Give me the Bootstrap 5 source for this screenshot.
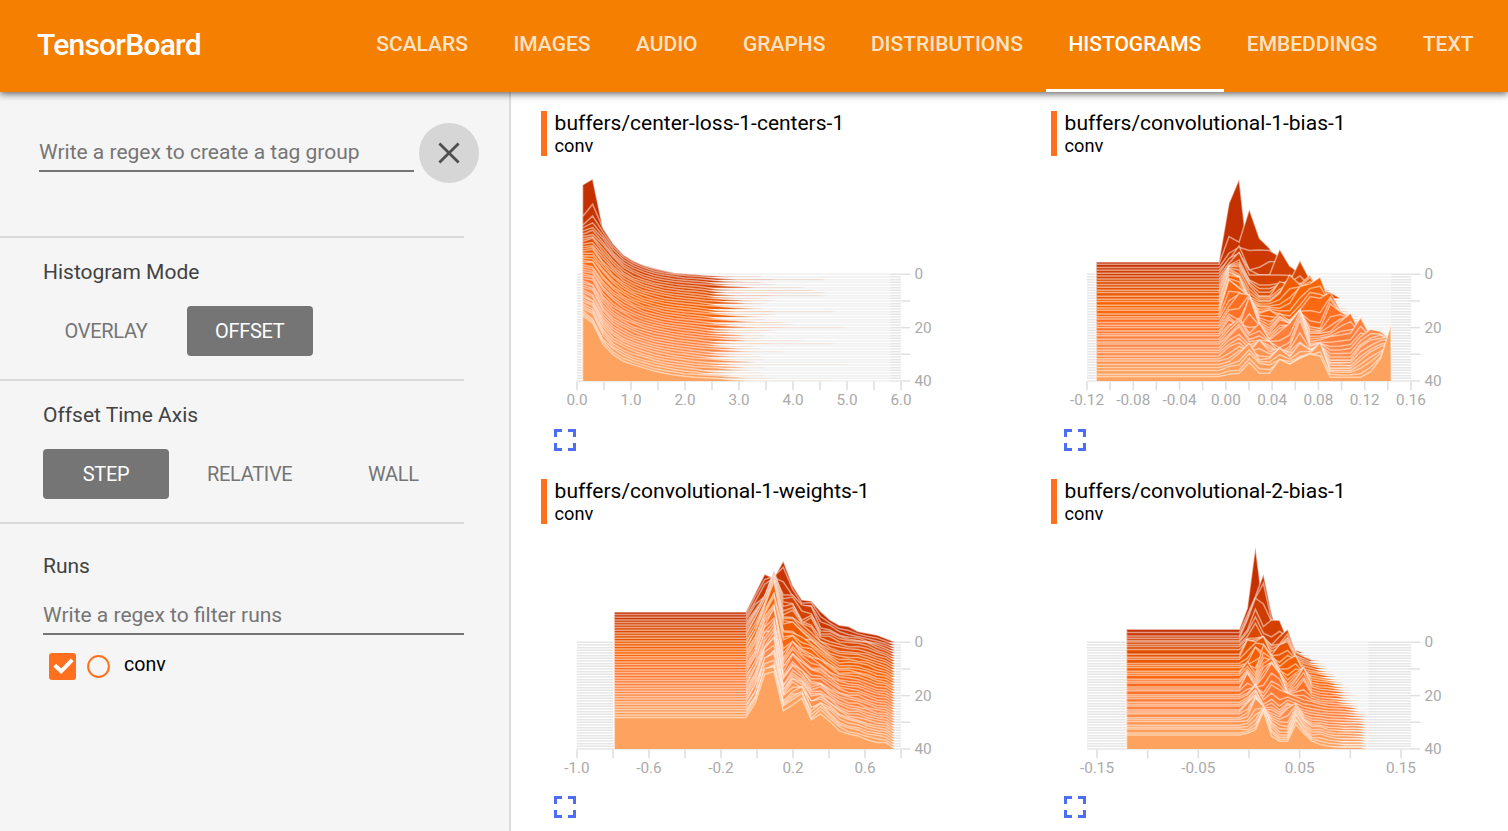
<!DOCTYPE html>
<html lang="en">
<head>
<meta charset="utf-8">
<meta name="viewport" content="width=device-width, initial-scale=1">
<title>TensorBoard</title>
<link href="https://cdn.jsdelivr.net/npm/bootstrap@5.3.0/dist/css/bootstrap.min.css" rel="stylesheet">
<style>
  body { font-family: Roboto, "Liberation Sans", sans-serif; font-size: 21px; line-height: 24px; color: #000; overflow: hidden; }
  .topbar { height: 92px; background: #f57f00; box-shadow: 0 2px 7px rgba(0,0,0,.6); z-index: 5; padding: 0 11.8px 0 37px; }
  .topbar .navbar-brand { font-size: 30px; font-weight: 500; letter-spacing: -.75px; color: #fff; margin: 0; padding: 0 0 3px; }
  .topbar .nav-link { height: 92px; padding: 0 22.75px 2px; color: rgba(255,255,255,.8); font-weight: 500; letter-spacing: -.015px; border-bottom: 3px solid transparent; border-top: 0; display: flex; align-items: center; }
  .topbar .nav-link.active { color: #fff; border-bottom-color: #fff; }
  .side { width: 511px; background: #f5f5f5; border-right: 2px solid #dcdcdc; color: #424242; }
  .regex { background: transparent; border: 0; border-bottom: 2px solid #757575; border-radius: 0; padding: 0; font-size: 21px; line-height: 24px; height: 33px; padding-bottom: 5px; }
  .regex::placeholder { color: #757575; opacity: 1; }
  .tag-row { padding: 31px 0 0 39px; height: 144px; gap: 5px; }
  .tag-row .regex { width: 375px; margin-top: 16px; }
  .close-btn { width: 60px; height: 60px; background: #d6d6d6; }
  .block { width: 464px; height: 143px; border-top: 2px solid #dadada; padding: 22px 0 0 43px; }
  .block.runs { padding-top: 30px; }
  .block .btn { width: 126px; height: 50px; font-size: 20px; line-height: 24px; border: 0; border-radius: 4px; padding: 0; color: #757575; letter-spacing: -.33px; }
  .block .btn.active { background: #757575; color: #fff; }
  .block .choices { gap: 17.7px; margin-top: 22px; }
  .tick-box { width: 27px; height: 27px; background: #ff6f1e; border-radius: 3px; }
  .run-row { padding: 18px 0 0 6px; gap: 11px; color: #000; font-size: 19.6px; }
  .run-label { margin: 0 0 0 3px; }
  .chart-grid { grid-template-columns: 510px 510px; grid-auto-rows: 368px; margin: 19px 0 0 30px; }
  .chart-name { border-left: 6px solid #ff6f1e; height: 45px; padding-left: 7.6px; line-height: 24px; }
  .chart-name .run-name { font-size: 18.2px; line-height: 21px; }
  .plot text { font: 15.3px Roboto, "Liberation Sans", sans-serif; fill: #aaa; }
  .expand { margin: 17px 0 0 13px; }
  article:nth-child(n+3) .expand { margin-top: 16px; }
</style>
</head>
<body class="vh-100 d-flex flex-column">
<nav class="navbar topbar flex-nowrap justify-content-between flex-shrink-0 position-relative">
  <a class="navbar-brand" href="#">TensorBoard</a>
  <div class="nav flex-nowrap">
    <a class="nav-link" href="#">SCALARS</a><a class="nav-link" href="#">IMAGES</a><a class="nav-link" href="#">AUDIO</a><a class="nav-link" href="#">GRAPHS</a><a class="nav-link" href="#">DISTRIBUTIONS</a><a class="nav-link active" href="#">HISTOGRAMS</a><a class="nav-link" href="#">EMBEDDINGS</a><a class="nav-link" href="#">TEXT</a>
  </div>
</nav>
<div class="d-flex flex-grow-1 overflow-hidden">
  <aside class="side flex-shrink-0">
    <div class="tag-row d-flex">
      <input class="form-control regex" placeholder="Write a regex to create a tag group">
      <button class="btn rounded-circle close-btn p-0 border-0 d-flex align-items-center justify-content-center" aria-label="Clear">
        <svg width="22" height="22" viewBox="0 0 22 22" stroke="#4f4f4f" stroke-width="2.8"><path d="M1.4 1.4 20.6 20.6M20.6 1.4 1.4 20.6"/></svg>
      </button>
    </div>
    <section class="block">
      <div>Histogram Mode</div>
      <div class="choices d-flex"><button class="btn">OVERLAY</button><button class="btn active">OFFSET</button></div>
    </section>
    <section class="block">
      <div>Offset Time Axis</div>
      <div class="choices d-flex"><button class="btn active">STEP</button><button class="btn">RELATIVE</button><button class="btn">WALL</button></div>
    </section>
    <section class="block runs">
      <div>Runs</div>
      <input class="form-control regex mt-4" placeholder="Write a regex to filter runs">
      <div class="run-row d-flex">
        <span class="tick-box"><svg class="d-block" width="27" height="27" fill="none" stroke="#fff" stroke-width="4"><path d="M5.7 12.2 12.2 18.3 23.2 6.8"/></svg></span>
        <svg width="23" height="27" fill="none" stroke="#ff6f1e" stroke-width="2"><circle cx="11.5" cy="13.5" r="10.4"/></svg>
        <span class="run-label">conv</span>
      </div>
    </section>
  </aside>
  <main class="flex-grow-1 overflow-hidden">
    <div class="chart-grid d-grid" id="charts"></div>
  </main>
</div>
<script src="https://cdn.jsdelivr.net/npm/bootstrap@5.3.0/dist/js/bootstrap.bundle.min.js"></script>
<script>
const STEPS = 40, GAP = 320 / 3 / STEPS;

/* Each chart: bin positions and, for selected steps, bin heights in thirds of a pixel. */
const bins = (first, start, step, n) => [first, ...Array.from({length: n + 1}, (_, i) => start + i * step)];
const charts = [
  { name: 'buffers/center-loss-1-centers-1', xs: bins(6, 16, 10.25, 29), noise: .03, tail: true,
    ticks: [0, 27, 13], labels: ['0.0','1.0','2.0','3.0','4.0','5.0','6.0'],
    keys: {
      0: [267,285,137,90,57,38,26,17,10,4,2],
      1: [180,217,145,98,65,46,32,23,16,10,8,6,4],
      2: [162,190,142,98,67,48,35,25,19,14,11,9,6,3],
      3: [162,177,139,98,67,49,36,27,21,16,12,10,7,4],
      5: [159,171,135,97,67,49,37,28,22,17,14,11,8,4],
      10:[162,165,128,95,68,51,39,30,23,18,15,12,8,4],
      20:[174,168,120,90,68,52,40,31,24,19,15,12,8,4],
      30:[186,172,113,82,64,49,39,30,24,19,15,11,7,4],
      40:[195,173,110,78,58,47,38,29,22,17,13,9,5,3] } },
  { name: 'buffers/convolutional-1-bias-1', xs: bins(9.7, 132.3, 10.12, 17), noise: .06, ease: true,
    ticks: [0, 23.14, 15], labels: ['-0.12','-0.08','-0.04','0.00','0.04','0.08','0.12','0.16'],
    keys: {
      0: [36,36,212,284,12,8,4,2],
      1: [37,37,120,103,202,115,85,40,6,2],
      2: [35,35,78,96,86,88,86,68,13,5],
      3: [35,35,66,108,36,44,61,60,30,8],
      4: [34,34,79,94,44,29,29,106,56,34,4],
      5: [34,34,72,105,37,37,37,37,35,27,10],
      6: [33,33,74,90,30,15,15,20,25,88,30,5],
      7: [33,33,80,90,34,12,12,24,30,50,20,4],
      8: [32,32,86,92,36,9,9,34,34,36,30,5],
      9: [32,32,94,94,39,6,6,49,39,30,64,24,17],
      10:[31,31,98,92,34,8,8,34,50,38,40,8,3],
      12:[29,29,108,88,28,13,13,38,93,63,93,40],
      15:[26,26,117,110,32,22,20,17,32,82,90,110,32,5],
      18:[24,24,126,101,76,26,36,16,6,36,76,71,89,36,5],
      21:[22,22,70,110,105,30,15,50,25,55,10,5,78,55,35],
      24:[21,21,64,34,124,39,14,54,44,84,14,14,19,49,74,14],
      27:[20,20,58,83,38,68,18,43,68,108,13,18,28,33,38,85,28],
      30:[19,19,52,82,37,42,37,5,22,102,22,32,12,12,17,52,74,67,40],
      33:[18,18,46,58,31,66,31,41,26,41,31,51,6,6,6,46,66,71,76],
      36:[16,16,25,50,80,30,35,65,40,80,60,70,6,6,6,30,55,70,80],
      38:[14,14,26,31,66,36,31,46,41,56,66,98,11,9,9,21,41,66,100],
      40:[12,12,19,22,54,22,22,64,49,67,80,74,10,10,10,10,27,67,167] } },
  { name: 'buffers/convolutional-1-weights-1', xs: bins(37.7, 169.3, 9.34, 16), noise: .07,
    ticks: [0, 36, 10], labels: ['-1.0','-0.6','-0.2','0.2','0.6'],
    keys: {
      0: [90,90,146,203,191,243,169,126,123,91,66,50,46,31,26,21,10],
      1: [90,90,144,195,205,232,166,124,126,84,64,48,42,32,25,20,10],
      3: [90,90,136,160,225,165,165,135,130,66,60,44,38,36,25,20,12],
      5: [91,91,130,170,249,160,155,105,120,64,64,50,44,42,38,24,14],
      10:[91,91,136,196,271,150,151,121,96,72,56,46,44,42,34,24,16],
      15:[91,91,136,206,266,135,140,118,108,84,60,40,42,38,32,20,16],
      20:[92,92,134,222,256,106,146,118,96,88,66,46,42,40,28,18,16],
      30:[92,92,140,214,246,108,146,126,91,92,72,54,42,38,28,20,17],
      38:[93,93,138,220,232,116,140,156,86,110,84,56,46,40,28,24,18],
      40:[93,93,136,223,231,113,131,151,86,104,81,53,44,38,26,18,18] } },
  { name: 'buffers/convolutional-2-bias-1', xs: bins(40, 152.7, 8.05, 16), noise: .06, ease: true,
    ticks: [10, 50.67, 7], labels: ['-0.15','-0.05','0.05','0.15'],
    keys: {
      0: [38,38,101,284,96,4,2],
      1: [36,36,89,144,211,94,10,2],
      2: [34,34,87,147,192,82,52,8],
      3: [35,35,90,155,138,85,70,15],
      4: [36,36,68,130,78,98,97,38,8],
      6: [40,40,64,104,59,39,64,86,19,4],
      7: [42,42,66,68,72,45,50,80,24,12,3],
      10:[34,34,86,81,96,41,71,81,31,16,8,3],
      13:[33,33,40,88,60,65,30,50,62,15,12,7,3],
      16:[34,34,69,34,119,84,44,14,34,49,14,10,8,3],
      19:[34,34,63,33,88,103,58,8,38,76,18,10,8,6,2],
      22:[35,35,82,42,72,112,82,22,32,62,17,9,7,6,3,1],
      25:[36,36,46,71,36,71,56,46,36,26,21,14,9,8,7,4],
      28:[37,37,50,80,30,40,20,40,30,20,15,11,9,8,7,5,3],
      31:[38,38,64,89,44,34,24,49,64,24,14,12,8,7,6,6,5],
      34:[39,39,48,103,78,38,23,18,68,38,18,18,9,7,6,6,5],
      37:[40,40,42,62,102,42,17,17,77,42,17,20,12,7,6,6,5],
      40:[41,41,46,56,111,38,22,22,73,46,23,13,8,6,5,5,5] } }
];

/* Small deterministic generator, so that the surface looks the same on each load. */
let seed = 11;
const rnd = () => (seed = (seed * 16807) % 2147483647) / 2147483647;

const stops = [[0,197,48,0],[.18,222,76,0],[.36,248,98,0],[.5,255,108,30],[.75,255,136,72],[1,254,163,95]];
function shade(t) {
  let k = 1;
  while (k < stops.length - 1 && stops[k][0] < t) k++;
  const a = stops[k-1], b = stops[k], f = (t - a[0]) / (b[0] - a[0]);
  return `rgb(${[1,2,3].map(j => Math.round(a[j] + (b[j] - a[j]) * f))})`;
}

function heights(c, i) {
  const ks = Object.keys(c.keys).map(Number);
  const hi = ks.find(k => k >= i), lo = ks.filter(k => k <= i).pop();
  const f = hi === lo ? 0 : (i - lo) / (hi - lo);
  const reach = 18 + Math.floor(Math.pow(rnd(), 2.5) * 10), body = 14.5 + rnd() * 3;
  return c.xs.map((_, j) => {
    const a = c.keys[lo][j] || 0, b = c.keys[hi][j] || 0;
    /* Peaks fall off quickly on both sides of their own step. */
    let h = a * (1 - f) + b * f;
    if (c.ease && j > 1) h -= Math.abs(a - b) * f * (1 - f) * .9;
    if (hi !== lo && j > (c.tail ? 0 : 1)) h *= 1 + (rnd() - .5) * 2 * c.noise;
    if (c.ease && hi !== lo && j < 2) h += (i % 3 - 1) * 2;
    if (c.tail && i && j > 10) h = Math.max(h, (body - j) * 1.75, j < reach ? 2.4 * (1 - j / (reach + 3)) : 0);
    return h / 3;
  });
}

function draw(c) {
  let s = '';
  for (let i = 0; i <= STEPS; i++)
    s += `<path d="M0 ${(i * GAP).toFixed(2)}H324" stroke="#000" stroke-opacity=".1" stroke-width="1.5"/>`;
  for (let i = 0; i <= STEPS; i++) {
    const y = i * GAP, hs = heights(c, i), xs = c.xs;
    const top = xs.map((x, j) => `${(x - .4).toFixed(1)} ${(y - hs[j] - (hs[j] > 2 ? .4 : 0)).toFixed(2)}`).join('L');
    s += `<path d="M${xs[0] - .4} ${y.toFixed(2)}L${top}L${xs[xs.length-1].toFixed(1)} ${y.toFixed(2)}" fill="${shade(i / STEPS)}" stroke="#fff" stroke-opacity=".5" stroke-width="1.5"/>`;
  }
  const [x0, dx, n] = c.ticks;
  for (let i = 0; i < n; i++) s += `<path d="M${x0 + i * dx} 107V116" stroke="#e0e0e0" stroke-width="1.6"/>`;
  c.labels.forEach((t, i) => s += `<text x="${x0 + i * 2 * dx}" y="130.7" text-anchor="middle">${t}</text>`);
  for (let i = 0; i < 5; i++) s += `<path d="M324 ${i * GAP * 10}h9" stroke="#e0e0e0" stroke-width="1.5"/>`;
  [0, 20, 40].forEach(v => s += `<text x="337.5" y="${v * GAP + 5}">${v}</text>`);
  return s;
}

document.getElementById('charts').innerHTML = charts.map(c => `
  <article>
    <div class="chart-name"><div>${c.name}</div><div class="run-name">conv</div></div>
    <svg class="plot d-block" width="450" height="256" viewBox="-36 -118.3 450 256">${draw(c)}</svg>
    <svg class="expand d-block" width="22" height="22" fill="none" stroke="#4d6df5" stroke-width="3"><path d="M1.5 8V1.5H8M14 1.5h6.5V8M20.5 14v6.5H14M8 20.5H1.5V14"/></svg>
  </article>`).join('');
</script>
</body>
</html>
